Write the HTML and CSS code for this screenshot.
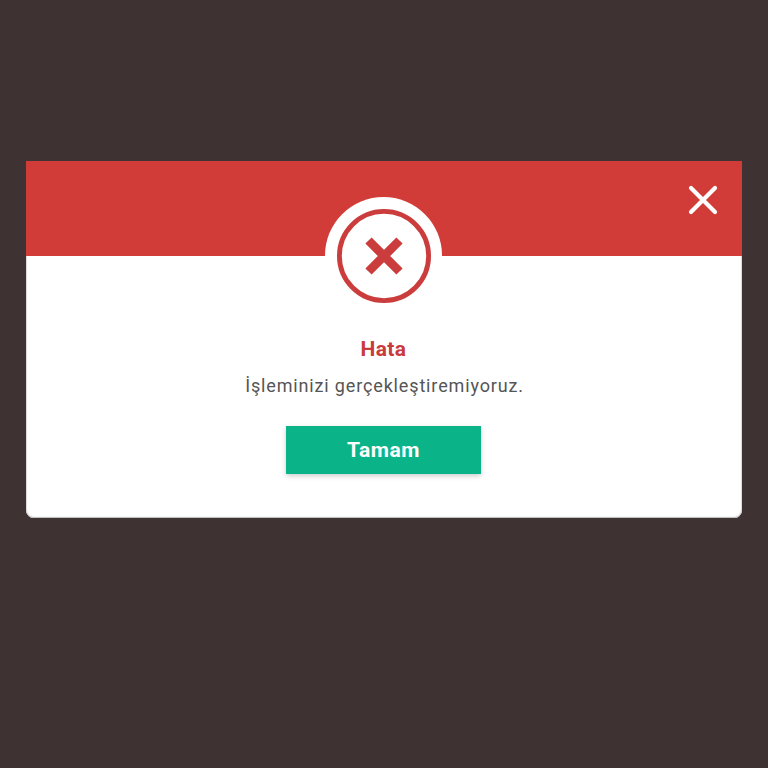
FILE: index.html
```html
<!DOCTYPE html>
<html lang="tr">
<head>
  <meta charset="UTF-8">
  <title>Hata</title>
  <meta name="viewport" content="width=device-width, initial-scale=1.0">
  <link rel="stylesheet" href="styles.css">
</head>
<body>
  <div class="dialog">
    <div class="dialog-header">
      <svg class="close" width="30" height="30" viewBox="0 0 30 30">
        <path d="M3 3L27 27M27 3L3 27" stroke="#fff" stroke-width="4.2" stroke-linecap="round" fill="none"/>
      </svg>
      <!-- Error badge sits across the header edge -->
      <div class="badge">
        <svg width="94" height="94" viewBox="0 0 94 94">
          <circle cx="47" cy="47" r="44.6" stroke="#cb3d3c" stroke-width="4.8" fill="#fff"/>
          <path d="M31.5 31.5L62.5 62.5M62.5 31.5L31.5 62.5" stroke="#cb3d3c" stroke-width="8.8" fill="none"/>
        </svg>
      </div>
    </div>
    <div class="dialog-body">
      <h3 class="title">Hata</h3>
      <p class="message">İşleminizi gerçekleştiremiyoruz.</p>
      <button class="ok-btn">Tamam</button>
    </div>
  </div>
</body>
</html>
```

FILE: styles.css
```css
body { background: #3e3232; margin: 0; padding: 161px 26px 0; font-family: Roboto, sans-serif; }
.dialog { background: #fff; border-radius: 0 0 8px 8px; height: 357px; overflow: hidden; box-shadow: inset 0 -1px 1px #bbb, inset 1px 0 1px #ddd, inset -1px 0 1px #ddd; }
.dialog-header { background: #d13b38; height: 95px; position: relative; }
.close { position: absolute; top: 24px; right: 24px; }
.badge { position: absolute; left: 299px; top: 36px; width: 117px; height: 117px; border-radius: 50%; background: #fff; display: flex; align-items: center; justify-content: center; }
.dialog-body { display: flex; flex-direction: column; align-items: center; padding: 81px 1px 0 0; }
.title { color: #c93a3c; font-size: 21px; line-height: 24px; font-weight: 700; margin: 0; letter-spacing: 0.4px; }
.message { color: #555; font-size: 18px; line-height: 24px; margin: 13px 0 0 2px; letter-spacing: 0.85px; }
.ok-btn { background: #0bb389; color: #fff; border: none; width: 195px; height: 48px; margin-top: 28px; font-family: Roboto, sans-serif; font-size: 21px; font-weight: 700; letter-spacing: 0.5px; box-shadow: 0 2px 5px rgba(0,0,0,0.2); }
```
